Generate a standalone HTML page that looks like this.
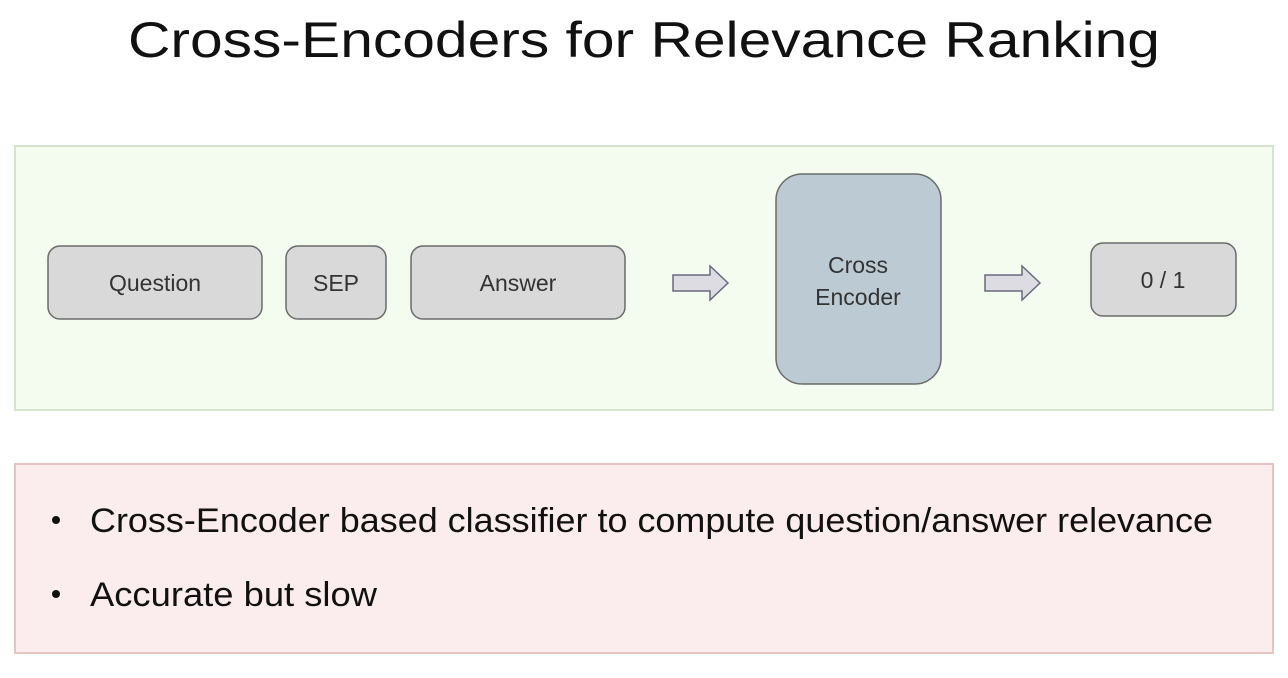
<!DOCTYPE html>
<html><head><meta charset="utf-8"><style>
html,body{margin:0;padding:0;background:#fff;}
svg{display:block;}
text{font-family:"Liberation Sans",sans-serif;}
</style></head><body>
<svg width="1288" height="678" viewBox="0 0 1288 678" xmlns="http://www.w3.org/2000/svg">
<rect width="1288" height="678" fill="#fff"/>
<text x="128" y="57" font-size="50" fill="#111" textLength="1032" lengthAdjust="spacingAndGlyphs">Cross-Encoders for Relevance Ranking</text>

<rect x="15" y="146" width="1258" height="264" fill="#f4fcf0" stroke="#d3e6cc" stroke-width="2"/>
<g stroke="#6b6b6b" stroke-width="1.5" fill="#d9d9d9">
<rect x="48" y="246" width="214" height="73" rx="12"/>
<rect x="286" y="246" width="100" height="73" rx="12"/>
<rect x="411" y="246" width="214" height="73" rx="12"/>
<rect x="1091" y="243" width="145" height="73" rx="12"/>
<rect x="776" y="174" width="165" height="210" rx="26" fill="#bccbd3"/>
</g>
<g font-size="23" fill="#333" text-anchor="middle">
<text x="155" y="291">Question</text>
<text x="336" y="291">SEP</text>
<text x="518" y="291">Answer</text>
<text x="1163" y="288">0 / 1</text>
<text x="858" y="273">Cross</text>
<text x="858" y="305">Encoder</text>
</g>
<g fill="#dcdce2" stroke="#6a6a80" stroke-width="1.5">
<path d="M673 275 H710 V266 L728 283 L710 300 V291 H673 Z"/>
<path d="M985 275 H1022 V266 L1040 283 L1022 300 V291 H985 Z"/>
</g>

<rect x="15" y="464" width="1258" height="189" fill="#fbeced" stroke="#e6c4c4" stroke-width="2"/>
<circle cx="56" cy="520" r="4" fill="#111"/>
<circle cx="56" cy="594" r="4" fill="#111"/>
<text x="90" y="532" font-size="34" fill="#111" textLength="1123" lengthAdjust="spacingAndGlyphs">Cross-Encoder based classifier to compute question/answer relevance</text>
<text x="90" y="606" font-size="34" fill="#111" textLength="287" lengthAdjust="spacingAndGlyphs">Accurate but slow</text>
</svg>
</body></html>
